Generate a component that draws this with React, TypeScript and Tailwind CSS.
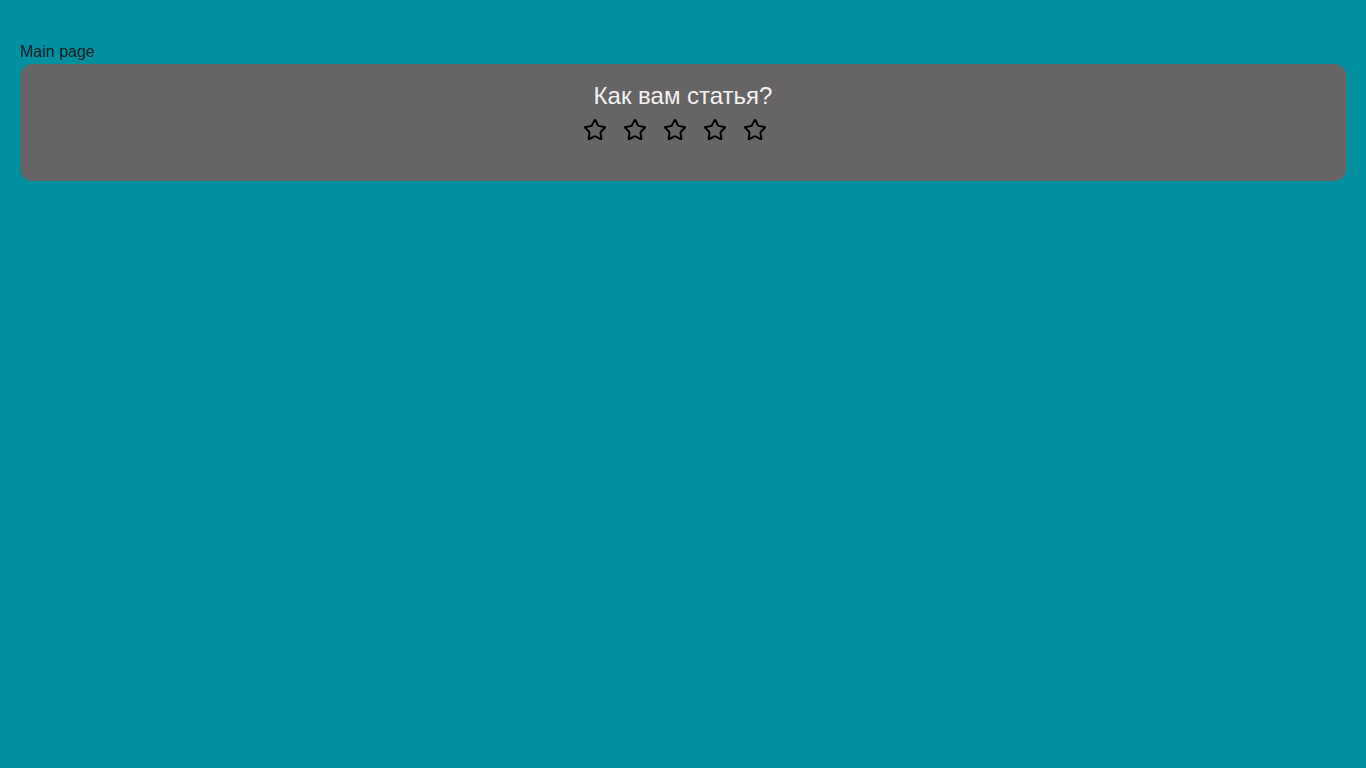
import React from "react";

function StarIcon() {
  return (
    <svg width="24" height="24" viewBox="0 0 24 24" fill="none" stroke="#000" strokeWidth="2" strokeLinejoin="round" strokeLinecap="round">
      <path d="M11.525 2.295a.53.53 0 0 1 .95 0l2.31 4.679a2.123 2.123 0 0 0 1.595 1.16l5.166.756a.53.53 0 0 1 .294.904l-3.736 3.638a2.123 2.123 0 0 0-.611 1.878l.882 5.14a.53.53 0 0 1-.771.56l-4.618-2.428a2.122 2.122 0 0 0-1.973 0L6.396 21.01a.53.53 0 0 1-.77-.56l.881-5.139a2.122 2.122 0 0 0-.611-1.879L2.16 9.795a.53.53 0 0 1 .294-.906l5.165-.755a2.122 2.122 0 0 0 1.597-1.16z" />
    </svg>
  );
}

export default function App() {
  return (
    <div className="min-h-screen w-full bg-[#0090a0] px-5 pt-10" style={{ fontFamily: '"Liberation Sans", Arial, sans-serif' }}>
      <div className="text-base leading-6 text-[#0c1c22]">Main page</div>
      <div className="flex h-[117px] flex-col items-center rounded-xl bg-[#666464] pt-[18px]">
        <div className="text-2xl leading-7 text-[#f2f2f2]">Как вам статья?</div>
        <div className="mt-[8px] flex">
          {[0, 1, 2, 3, 4].map((i) => (
            <div key={i} className="pr-4">
              <StarIcon />
            </div>
          ))}
        </div>
      </div>
    </div>
  );
}
